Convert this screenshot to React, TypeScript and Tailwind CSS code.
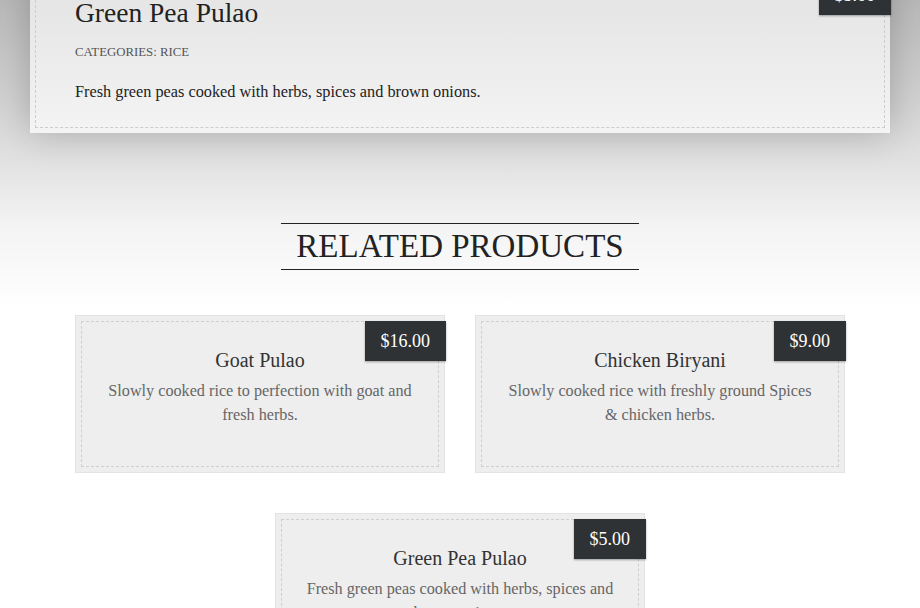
const serif = { fontFamily: '"Liberation Serif", "DejaVu Serif", serif' };

type Product = { name: string; price: string; text: string };

const related: Product[] = [
  { name: "Goat Pulao", price: "$16.00", text: "Slowly cooked rice to perfection with goat and fresh herbs." },
  { name: "Chicken Biryani", price: "$9.00", text: "Slowly cooked rice with freshly ground Spices & chicken herbs." },
  { name: "Green Pea Pulao", price: "$5.00", text: "Fresh green peas cooked with herbs, spices and brown onions." },
];

function PriceTag({ price, className }: { price: string; className: string }) {
  return (
    <div
      className={`absolute h-[40px] px-[16px] bg-[#2e3235] text-white text-[18px] leading-[40px] shadow-[0_1px_2px_rgba(0,0,0,0.35)] ${className}`}
    >
      {price}
    </div>
  );
}

function RelatedCard({ p }: { p: Product }) {
  return (
    <div className="relative w-[370px] bg-[#eeeeee] border border-[#e3e3e3] p-[5px]">
      <div className="h-[146px] border border-dashed border-[#cfcfcf] px-[22px] pt-[25px] text-center">
        <h3 className="text-[20px] leading-[26px] text-[#333]">{p.name}</h3>
        <p className="mt-[6px] text-[16.2px] leading-[24px] text-[#666]">{p.text}</p>
      </div>
      <PriceTag price={p.price} className="top-[5px] right-[-2px]" />
    </div>
  );
}

export default function App() {
  return (
    <div
      className="min-h-screen overflow-hidden bg-[linear-gradient(to_bottom,#b9b9b9_0px,#dcdcdc_140px,#f4f4f4_230px,#ffffff_310px)]"
      style={serif}
    >
      <div className="px-[30px]">
        <div className="relative -mt-[30px] bg-[linear-gradient(to_bottom,#e2e2e2,#f4f4f4)] p-[5px] shadow-[0_0_35px_rgba(0,0,0,0.22)]">
          <div className="border border-dashed border-[#cdcdcd] px-[39px] pt-[20px] pb-[24px]">
            <h1 className="text-[27.5px] leading-[34px] text-[#222]">Green Pea Pulao</h1>
            <p className="mt-[13px] text-[12.8px] leading-[18px] text-[#555] uppercase">Categories: Rice</p>
            <p className="mt-[20px] text-[16.3px] leading-[22px] text-[#222]">
              Fresh green peas cooked with herbs, spices and brown onions.
            </p>
          </div>
          <PriceTag price="$5.00" className="top-[5px] right-[-1px]" />
        </div>
      </div>

      <div className="mt-[90px] flex justify-center">
        <h2 className="border-y border-[#222] px-[15px] text-[33px] leading-[45px] text-[#222] uppercase">
          Related Products
        </h2>
      </div>

      <div className="mt-[45px] flex flex-wrap justify-center gap-x-[30px] gap-y-[40px] px-[75px] pb-10">
        {related.map((p) => (
          <RelatedCard key={p.name} p={p} />
        ))}
      </div>
    </div>
  );
}
